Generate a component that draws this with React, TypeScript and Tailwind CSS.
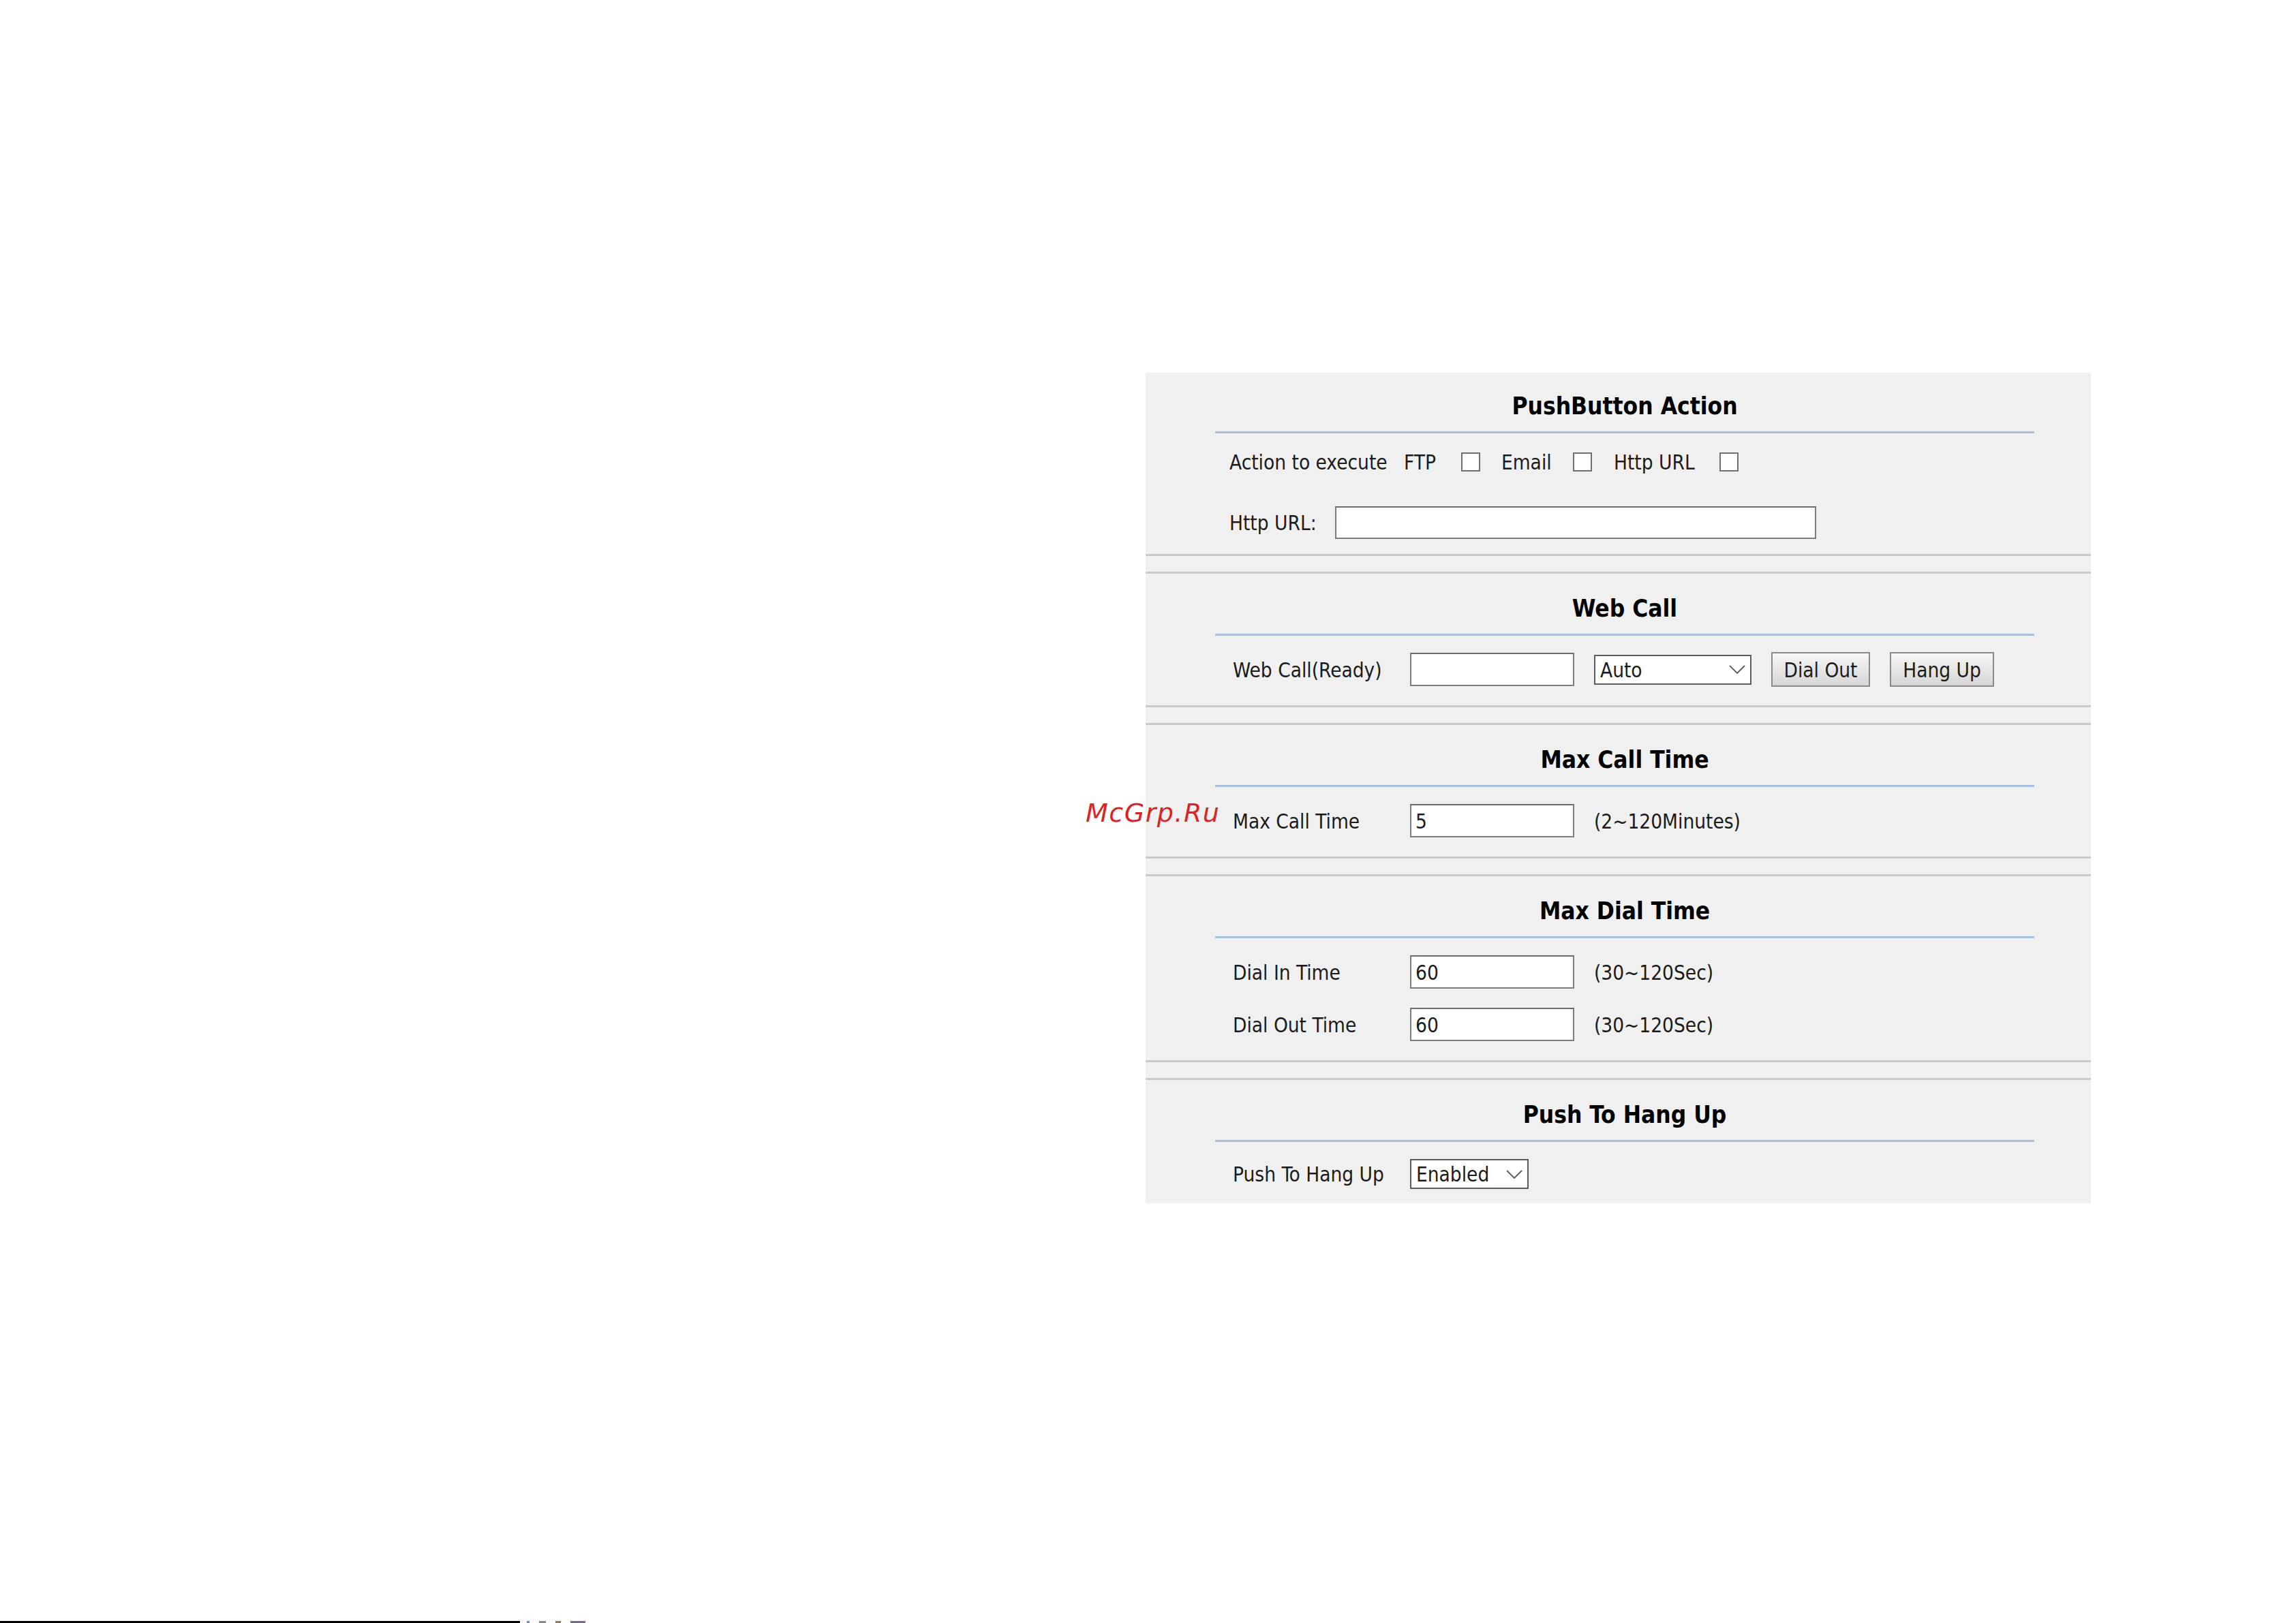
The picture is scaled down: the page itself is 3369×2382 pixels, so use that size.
import React from "react";

function Chevron() {
  return (
    <svg width="24" height="13" viewBox="0 0 24 13" className="shrink-0">
      <path d="M1 1 L12 12 L23 1" stroke="#5a5a5a" strokeWidth="1.8" fill="none" />
    </svg>
  );
}

function Box({ value, w }: { value?: string; w: string }) {
  return (
    <div
      className={`${w} h-[49px] shrink-0 bg-white border-2 border-[#7d7d7d] border-t-[#6a6a6a] flex items-center pl-[6px] pt-[3px] text-[#1b1b1b]`}
    >
      {value}
    </div>
  );
}

function Select({ value, w }: { value: string; w: string }) {
  return (
    <div
      className={`${w} h-[44px] shrink-0 bg-white border-2 border-[#5c5c5c] flex items-center justify-between pl-[7px] pr-[7px] text-[#1b1b1b]`}
    >
      <span className="pt-[3px]">{value}</span>
      <Chevron />
    </div>
  );
}

function Btn({ label, w }: { label: string; w: string }) {
  return (
    <div
      className={`${w} h-[51px] shrink-0 border-2 border-[#8a8a8a] bg-linear-to-b from-[#f7f7f7] to-[#d6d6d6] flex items-center justify-center pt-[3px] text-[#1b1b1b]`}
    >
      {label}
    </div>
  );
}

function Check() {
  return <div className="w-[28px] h-[28px] shrink-0 bg-white border-2 border-[#707070]" />;
}

function Title({ text }: { text: string }) {
  return (
    <div className="ml-[102px] mr-[83px]">
      <div className="h-[40px] flex items-center justify-center pt-[6px] text-[35px] font-bold text-black whitespace-nowrap">
        {text}
      </div>
      <div className="mt-[20px] h-[3px] bg-[#a9bedc]" />
    </div>
  );
}

export default function App() {
  return (
    <div className="w-[3369px] h-[2382px] bg-white flex flex-col overflow-hidden font-['DejaVu_Sans_Condensed','Liberation_Sans',sans-serif] text-[29.5px] text-[#1b1b1b]">
      <div className="pt-[547px] pl-[1681px] relative">
        <div className="w-[1387px] bg-[#f0f0f0] flex flex-col gap-[23px]">
          {/* PushButton Action */}
          <div className="pt-[26px] pb-[22px] border-b-[3px] border-[#c9c9c9]">
            <Title text="PushButton Action" />
            <div className="pl-[123px] pt-[24px]">
              <div className="h-[36px] flex items-center whitespace-nowrap">
                <span className="w-[256px] shrink-0 pt-[3px]">Action to execute</span>
                <span className="w-[84px] shrink-0 pt-[3px]">FTP</span>
                <Check />
                <span className="ml-[31px] w-[105px] shrink-0 pt-[3px]">Email</span>
                <Check />
                <span className="ml-[32px] w-[155px] shrink-0 pt-[3px]">Http URL</span>
                <Check />
              </div>
              <div className="mt-[47px] h-[48px] flex items-center whitespace-nowrap">
                <span className="w-[155px] shrink-0 pt-[3px]">Http URL:</span>
                <div className="w-[706px] h-[48px] bg-white border-2 border-[#7d7d7d] border-t-[#6a6a6a]" />
              </div>
            </div>
          </div>

          {/* Web Call */}
          <div className="pt-[28px] pb-[28px] border-t-[3px] border-b-[3px] border-[#c9c9c9]">
            <Title text="Web Call" />
            <div className="pl-[128px] pt-[25px]">
              <div className="h-[49px] flex items-center whitespace-nowrap">
                <span className="w-[260px] shrink-0 pt-[3px]">Web Call(Ready)</span>
                <Box w="w-[241px]" />
                <div className="ml-[29px]">
                  <Select value="Auto" w="w-[231px]" />
                </div>
                <div className="ml-[29px]">
                  <Btn label="Dial Out" w="w-[145px]" />
                </div>
                <div className="ml-[29px]">
                  <Btn label="Hang Up" w="w-[153px]" />
                </div>
              </div>
            </div>
          </div>

          {/* Max Call Time */}
          <div className="pt-[28px] pb-[28px] border-t-[3px] border-b-[3px] border-[#c9c9c9]">
            <Title text="Max Call Time" />
            <div className="pl-[128px] pt-[25px]">
              <div className="h-[49px] flex items-center whitespace-nowrap">
                <span className="w-[260px] shrink-0 pt-[3px]">Max Call Time</span>
                <Box w="w-[241px]" value="5" />
                <span className="ml-[29px] pt-[3px]">(2~120Minutes)</span>
              </div>
            </div>
          </div>

          {/* Max Dial Time */}
          <div className="pt-[28px] pb-[28px] border-t-[3px] border-b-[3px] border-[#c9c9c9]">
            <Title text="Max Dial Time" />
            <div className="pl-[128px] pt-[25px] flex flex-col gap-[28px]">
              <div className="h-[49px] flex items-center whitespace-nowrap">
                <span className="w-[260px] shrink-0 pt-[3px]">Dial In Time</span>
                <Box w="w-[241px]" value="60" />
                <span className="ml-[29px] pt-[3px]">(30~120Sec)</span>
              </div>
              <div className="h-[49px] flex items-center whitespace-nowrap">
                <span className="w-[260px] shrink-0 pt-[3px]">Dial Out Time</span>
                <Box w="w-[241px]" value="60" />
                <span className="ml-[29px] pt-[3px]">(30~120Sec)</span>
              </div>
            </div>
          </div>

          {/* Push To Hang Up */}
          <div className="pt-[28px] pb-[21px] border-t-[3px] border-[#c9c9c9]">
            <Title text="Push To Hang Up" />
            <div className="pl-[128px] pt-[25px]">
              <div className="h-[44px] flex items-center whitespace-nowrap">
                <span className="w-[260px] shrink-0 pt-[3px]">Push To Hang Up</span>
                <Select value="Enabled" w="w-[174px]" />
              </div>
            </div>
          </div>
        </div>

        {/* watermark */}
        <div className="absolute left-[1593px] top-[1174px] text-[38px] leading-none italic tracking-[1.5px] text-[#d92525] font-['DejaVu_Sans',sans-serif] whitespace-nowrap">
          McGrp.Ru
        </div>
      </div>

      <div className="flex-1" />
      <div className="h-[4px] flex items-end">
        <div className="w-[763px] h-[3px] bg-black" />
        <div className="ml-[10px] flex items-end gap-[14px] h-[4px]">
          <div className="w-[4px] h-[3px] bg-[#6b8fb8]" />
          <div className="w-[10px] h-[3px] bg-[#8a8a8a]" />
          <div className="w-[8px] h-[3px] bg-[#9a7a5a]" />
          <div className="w-[22px] h-[3px] bg-[#7a6a8a]" />
        </div>
      </div>
    </div>
  );
}
